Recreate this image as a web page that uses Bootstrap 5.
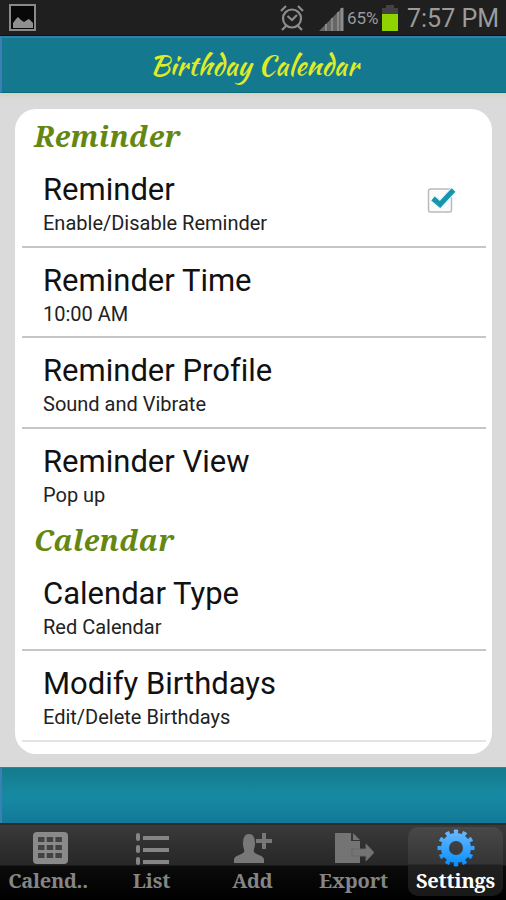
<!DOCTYPE html>
<html lang="en">
<head>
<meta charset="utf-8">
<meta name="viewport" content="width=device-width, initial-scale=1">
<title>Birthday Calendar</title>
<link href="https://cdn.jsdelivr.net/npm/bootstrap@5.3.0/dist/css/bootstrap.min.css" rel="stylesheet">
<style>
body{width:506px;height:900px;overflow:hidden;background:#dadada;font-family:Roboto,"Liberation Sans",sans-serif;font-variant-ligatures:none;color:#111}
svg{display:block;flex:none}
.status{height:36px;background:#1f1f1f;color:#9b9b9b;border-bottom:1px solid #180d12}
.photo{margin-left:9px}
.signal{margin-left:14px}
.pct{font-size:17px;line-height:36px;width:34px;margin-left:2px;padding-top:1px;white-space:nowrap}
.clock{font-size:25px;line-height:36px;white-space:nowrap;width:91px;margin:0 8px 0 8px;padding-top:2px}
.titlebar{height:57px;background:#14788f;border-top:2px solid #3180aa;border-left:2px solid #3b7fb5;border-bottom:1px solid #0b6b7d}
.brand{font-family:"Kaushan Script",Lato,sans-serif;font-weight:400;font-size:28px;letter-spacing:.1px;color:#dfeb26;line-height:1;white-space:nowrap}
.content{height:674px;background:linear-gradient(#d5d2bd,#dadada 5px);padding:16px 14px 13px 15px}
.sheet{height:645px;background:#fff;border-radius:21px;padding:7px 6px 0 7px;overflow:hidden}
.heading{height:41px;line-height:39px;margin:0;padding-left:12px;font-family:"Droid Serif","Noto Serif","DejaVu Serif Condensed","DejaVu Serif",serif;font-weight:700;font-style:italic;font-size:29px;letter-spacing:.25px;color:#648712;white-space:nowrap}
.pref{height:90.7px;padding-left:21px;padding-right:30px;border-bottom:2px solid #c6c6c6}
.pref.plain{border-bottom-color:transparent}
.pref.faint{border-bottom-color:#e4e4e4}
.name{font-size:31px;line-height:36px;margin-top:15px;white-space:nowrap}
.note{font-size:20px;line-height:24px;margin-top:3px;color:#222;white-space:nowrap}
.check{margin-top:23px}
.band{height:56px;border-top:1px solid #2d83a5;border-left:2px solid #3b7fb5;background:linear-gradient(#157a8d,#178aa3 50%,#127998)}
.tabs{height:77px;background:linear-gradient(#3a3a3a 0,#272727 40px,#0b0b0b 41px,#000 100%);border-top:2px solid #282d2e;padding:2px 2px 4px 0}
.tab{width:101px;color:#858585;font-family:"Droid Serif","Noto Serif","DejaVu Serif Condensed","DejaVu Serif",serif;font-weight:700;font-size:20px;letter-spacing:-.1px;line-height:24px;border-radius:10px;padding-top:2px;white-space:nowrap}
.tab:first-child{padding-right:5px;letter-spacing:-.3px}
.tab.on{width:95px;margin-left:4px;color:#fff;letter-spacing:-.15px;background:linear-gradient(#484848,#353535 37px,#202020 38px,#191919)}
.tab svg{margin-bottom:2px}
</style>
</head>
<body>
<header class="status d-flex align-items-center">
  <svg class="photo me-auto" width="28" height="28" viewBox="0 0 28 28"><path d="M1 1h25v25H1z" fill="#080808" stroke="#8a8a8a" stroke-width="2"/><path d="M4 24v-5l3-4 2-2 3 3 3 2 3-2 2-1 4 4v5z" fill="#8f8f8f"/></svg>
  <svg width="26" height="28" viewBox="0 0 26 28" fill="none" stroke="#8c8c8c" stroke-width="2.2"><circle cx="13" cy="14.500" r="9"/><path d="M8.500 12l4.500 4 5-5M2 7l5-5M24 7l-5-5M7 22l-4 4M19 22l4 4"/></svg>
  <svg class="signal" width="26" height="28" viewBox="0 0 26 28"><path d="M0 27L24 3v24z" fill="#666"/><path d="M7 27v-7M13 27V14M19 27V8" stroke="#888" stroke-width="2"/><path d="M23 4v23" stroke="#8c8c8c" stroke-width="3"/></svg>
  <span class="pct">65%</span>
  <svg width="18" height="28" viewBox="0 0 18 28"><path d="M5 1h8v3h4v7H1V4h4z" fill="#424242"/><path d="M1 10h16v17H1z" fill="#8fd300"/></svg>
  <span class="clock">7:57 PM</span>
</header>
<div class="titlebar d-flex align-items-center justify-content-center"><h1 class="brand m-0">Birthday Calendar</h1></div>
<main class="content">
  <div class="sheet">
    <h2 class="heading">Reminder</h2>
    <div class="pref d-flex justify-content-between"><div><div class="name">Reminder</div><div class="note">Enable/Disable Reminder</div></div>
      <svg class="check" width="32" height="36" viewBox="0 0 32 36"><rect x="4.500" y="9" width="23" height="23" rx="2" fill="#fafafa" stroke="#bbb" stroke-width="1.500"/><path d="M9 18.500l7 6L29.500 10" fill="none" stroke="#d8f5f9" stroke-width="7"/><path d="M9 18.500l7 6L29.500 10" fill="none" stroke="#1795ad" stroke-width="5"/></svg></div>
    <div class="pref"><div class="d-flex"><div class="name">Reminder Time</div></div><div class="note">10:00 AM</div></div>
    <div class="pref"><div class="d-flex"><div class="name">Reminder Profile</div></div><div class="note">Sound and Vibrate</div></div>
    <div class="pref plain"><div class="d-flex"><div class="name">Reminder View</div></div><div class="note">Pop up</div></div>
    <h2 class="heading">Calendar</h2>
    <div class="pref"><div class="d-flex"><div class="name">Calendar Type</div></div><div class="note">Red Calendar</div></div>
    <div class="pref faint"><div class="d-flex"><div class="name">Modify Birthdays</div></div><div class="note">Edit/Delete Birthdays</div></div>
  </div>
</main>
<div class="band"></div>
<nav class="tabs d-flex">
  <div class="tab d-flex flex-column align-items-center"><svg width="40" height="38" viewBox="-3 -1 40 38"><rect x="2" y="2" width="35" height="32" rx="4" fill="#8a8a8a"/><path d="M7 9.500h24M7 17.500h24M7 25.500h24" stroke="#424242" stroke-width="5" stroke-dasharray="6.500 2.200"/></svg>Calend..</div>
  <div class="tab d-flex flex-column align-items-center"><svg width="40" height="38" viewBox="0 -1 40 38" fill="#858585"><rect x="4" y="3" width="4" height="8" rx="2"/><rect x="4" y="15" width="4" height="8" rx="2"/><rect x="4" y="27" width="4" height="8" rx="2"/><path d="M11 6h26v4H11zM11 18h26v4H11zM11 30h26v4H11z"/></svg>List</div>
  <div class="tab d-flex flex-column align-items-center"><svg width="40" height="38" viewBox="0 -1 40 38" fill="#787878"><path d="M1 33v-4c1-4 8-4 10-7 1-2-1-4-1-8 0-7 2-10 6-10s6 3 6 10c0 4-2 6-1 8 2 3 9 3 10 7v4z"/><path d="M29 3h4v6h6v4h-6v6h-4v-6h-6V9h6z"/></svg>Add</div>
  <div class="tab d-flex flex-column align-items-center"><svg width="40" height="38" viewBox="1 -1 40 38" fill="#747474"><path d="M2 3h16v8h9v22H2z"/><path d="M20 3l7 7h-7z"/><path d="M19 19h14v-5l8 8.500-8 8.500v-5H19z" stroke="#666"/></svg>Export</div>
  <div class="tab on d-flex flex-column align-items-center"><svg width="40" height="38" viewBox="0 -1 40 38"><defs><linearGradient id="blue" x1="0" y1="0" x2="0" y2="38" gradientUnits="userSpaceOnUse"><stop stop-color="#6bb9ff"/><stop offset="1" stop-color="#008cff"/></linearGradient></defs><circle cx="20" cy="18" r="11" fill="none" stroke="url(#blue)" stroke-width="8"/><circle cx="20" cy="18" r="16.500" fill="none" stroke="url(#blue)" stroke-width="4" pathLength="120" stroke-dasharray="5 5" stroke-dashoffset="2.500"/></svg>Settings</div>
</nav>
<script src="https://cdn.jsdelivr.net/npm/bootstrap@5.3.0/dist/js/bootstrap.bundle.min.js"></script>
</body>
</html>
